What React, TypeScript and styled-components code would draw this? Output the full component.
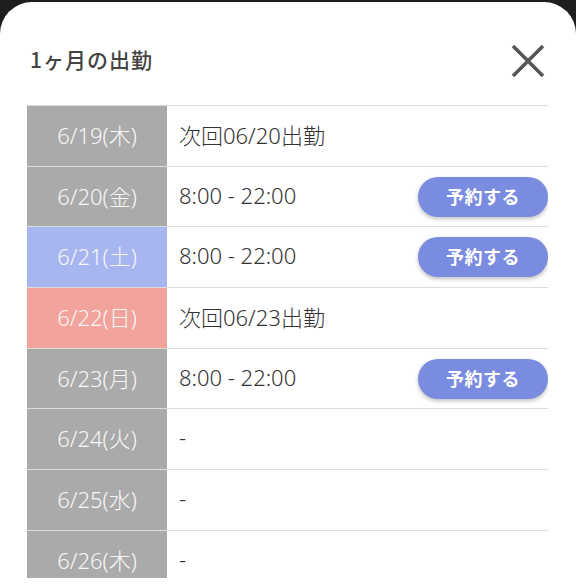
import React from 'react';
import styled, { createGlobalStyle } from 'styled-components';

const GlobalStyle = createGlobalStyle`
  html, body {
    margin: 0;
    padding: 0;
    background: #1e1e1e;
    font-family: "Noto Sans", "Noto Sans CJK JP", sans-serif;
  }
`;

const colors = {
  gray: '#aaaaaa',
  blue: '#a7b6f0',
  red: '#f2a39b',
  line: '#dcdcdc',
  button: '#7a8ce0',
  text: '#333333',
};

const Backdrop = styled.div`
  height: 586px;
  padding-top: 2px;
  box-sizing: border-box;
  overflow: hidden;
`;

const Sheet = styled.div`
  background: #ffffff;
  border-radius: 32px 32px 0 0;
  height: 584px;
  display: flex;
  flex-direction: column;
  padding: 0 28px 0 27px;
  box-sizing: border-box;
`;

const Header = styled.div`
  height: 103px;
  display: flex;
  align-items: center;
  justify-content: space-between;
  padding-left: 3px;
  padding-top: 14px;
  box-sizing: border-box;
`;

const Title = styled.h1`
  margin: 0 0 4px;
  font-size: 21px;
  font-weight: 500;
  color: #444444;
  letter-spacing: 1px;
  font-family: "Noto Sans CJK JP", sans-serif;
`;

const CloseButton = styled.button`
  border: 0;
  background: none;
  padding: 0;
  width: 36px;
  height: 36px;
  margin-right: 2px;
  display: flex;
  align-items: center;
  justify-content: center;
`;

const List = styled.div`
  height: 472px;
  overflow: hidden;
  border-top: 1.5px solid ${colors.line};
`;

const Row = styled.div`
  display: flex;
  height: 60.7px;
  border-bottom: 1.5px solid ${colors.line};
  box-sizing: border-box;
`;

const DateCell = styled.div<{ $tone: 'gray' | 'blue' | 'red' }>`
  width: 140px;
  flex-shrink: 0;
  background: ${(p) => colors[p.$tone]};
  color: #f7f7f7;
  font-size: 22px;
  font-weight: 300;
  padding-bottom: 4px;
  box-sizing: border-box;
  display: flex;
  align-items: center;
  justify-content: center;
`;

const InfoCell = styled.div`
  flex: 1;
  display: flex;
  align-items: center;
  justify-content: space-between;
  padding-left: 12px;
  color: ${colors.text};
  font-size: 22px;
  font-weight: 300;
`;

const InfoText = styled.span`
  padding-bottom: 4px;
`;

const ReserveButton = styled.button`
  width: 130px;
  height: 40px;
  border: 0;
  border-radius: 20px;
  background: ${colors.button};
  color: #ffffff;
  font-family: "Noto Sans CJK JP", sans-serif;
  font-size: 18px;
  font-weight: 700;
  letter-spacing: 0.5px;
  box-shadow: 0 2px 4px rgba(0, 0, 0, 0.25);
  padding: 0 0 2px;
`;

type Day = {
  date: string;
  tone: 'gray' | 'blue' | 'red';
  info: string;
  reservable?: boolean;
};

const days: Day[] = [
  { date: '6/19(木)', tone: 'gray', info: '次回06/20出勤' },
  { date: '6/20(金)', tone: 'gray', info: '8:00 - 22:00', reservable: true },
  { date: '6/21(土)', tone: 'blue', info: '8:00 - 22:00', reservable: true },
  { date: '6/22(日)', tone: 'red', info: '次回06/23出勤' },
  { date: '6/23(月)', tone: 'gray', info: '8:00 - 22:00', reservable: true },
  { date: '6/24(火)', tone: 'gray', info: '-' },
  { date: '6/25(水)', tone: 'gray', info: '-' },
  { date: '6/26(木)', tone: 'gray', info: '-' },
];

export default function App() {
  return <Backdrop>
    <GlobalStyle />
    <Sheet>
      <Header>
        <Title>1ヶ月の出勤</Title>
        <CloseButton aria-label="閉じる">
          <svg width="34" height="34" viewBox="0 0 34 34">
            <path d="M2 2 L32 32 M32 2 L2 32" stroke="#555" strokeWidth="3.5" strokeLinecap="butt" />
          </svg>
        </CloseButton>
      </Header>
      <List>
        {days.map((d) => (
          <Row key={d.date}>
            <DateCell $tone={d.tone}>{d.date}</DateCell>
            <InfoCell>
              <InfoText>{d.info}</InfoText>
              {d.reservable && <ReserveButton>予約する</ReserveButton>}
            </InfoCell>
          </Row>
        ))}
      </List>
    </Sheet>
  </Backdrop>;
}
